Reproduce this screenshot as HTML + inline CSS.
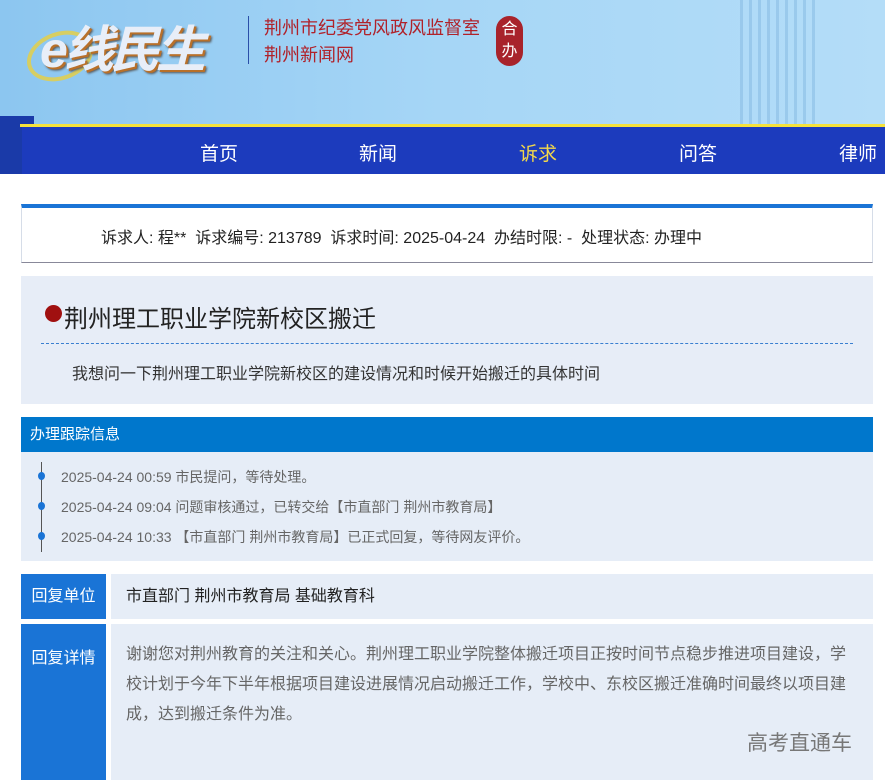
<!DOCTYPE html>
<html><head><meta charset="utf-8"><style>
body{margin:0;width:885px;height:780px;overflow:hidden;background:#fff;font-family:"Liberation Sans","Noto Sans CJK SC",sans-serif;position:relative}
.a{position:absolute}
</style></head><body>
<div class="a" style="left:0;top:0;width:885px;height:126px;background:linear-gradient(90deg,#8cc6f0,#a6d6f6 50%,#b4ddf8)"></div>
<div class="a" style="left:26px;top:32px;width:60px;height:40px;border-radius:50%;border:4px solid #e8d040;transform:rotate(-20deg);opacity:.8"></div>
<div class="a" style="left:40px;top:10px;font-size:50px;font-weight:bold;font-style:italic;color:#e8eef8;text-shadow:2px 2px 0 #b8702a,3px 3px 2px #555;letter-spacing:-4px">e线民生</div>
<div class="a" style="left:248px;top:16px;width:1px;height:48px;background:#2a4fa8"></div>
<div class="a" style="left:264px;top:15px;font-size:18px;color:#b0222a;line-height:27px">荆州市纪委党风政风监督室<br>荆州新闻网</div>
<div class="a" style="left:496px;top:16px;width:27px;height:50px;border-radius:14px;background:#a8232b;color:#fff;font-size:16px;text-align:center;line-height:22px;padding-top:3px;box-sizing:border-box">合<br>办</div>
<div class="a" style="left:740px;top:0;width:80px;height:124px;opacity:.35;background:repeating-linear-gradient(90deg,#6fa8d8 0 3px,transparent 3px 9px)"></div>
<div class="a" style="left:0;top:116px;width:34px;height:58px;background:#1a3aa8"></div>
<div class="a" style="left:20px;top:124px;width:865px;height:3px;background:#f5e23c"></div>
<div class="a" style="left:22px;top:127px;width:863px;height:47px;background:#1c3bbd;color:#fff;font-size:19px">
<span class="a" style="left:178px;top:12px">首页</span><span class="a" style="left:337px;top:12px">新闻</span><span class="a" style="left:497px;top:12px;color:#f3d84a">诉求</span><span class="a" style="left:657px;top:12px">问答</span><span class="a" style="left:817px;top:12px">律师</span></div>
<div class="a" style="left:21px;top:204px;width:852px;height:59px;border:1px solid #d6dde8;border-top:4px solid #1a74d6;border-bottom:1px solid #889;box-sizing:border-box;background:#fff;font-size:16px;color:#222;padding:16px 0 0 79px;white-space:nowrap">诉求人: 程**&nbsp; 诉求编号: 213789&nbsp; 诉求时间: 2025-04-24&nbsp; 办结时限: -&nbsp; 处理状态: 办理中</div>
<div class="a" style="left:21px;top:276px;width:852px;height:128px;background:#e7edf7"></div>
<div class="a" style="left:45px;top:305px;width:17px;height:17px;border-radius:50%;background:#a01010"></div>
<div class="a" style="left:64px;top:299px;font-size:24px;color:#222">荆州理工职业学院新校区搬迁</div>
<div class="a" style="left:41px;top:343px;width:812px;border-top:1px dashed #3a7fd0"></div>
<div class="a" style="left:72px;top:360px;font-size:16px;color:#333">我想问一下荆州理工职业学院新校区的建设情况和时候开始搬迁的具体时间</div>
<div class="a" style="left:21px;top:417px;width:852px;height:35px;background:#0077cc;color:#fff;font-size:15px;line-height:36px;padding-left:9px;box-sizing:border-box">办理跟踪信息</div>
<div class="a" style="left:21px;top:452px;width:852px;height:109px;background:#e6edf7;font-size:14px;color:#666">
<div class="a" style="left:20px;top:10px;width:1px;height:90px;background:#555"></div>
<div class="a" style="left:17px;top:20px;width:7px;height:8px;border-radius:50%;background:#1a74d6"></div>
<div class="a" style="left:17px;top:50px;width:7px;height:8px;border-radius:50%;background:#1a74d6"></div>
<div class="a" style="left:17px;top:80px;width:7px;height:8px;border-radius:50%;background:#1a74d6"></div>
<div class="a" style="left:40px;top:15px">2025-04-24 00:59 市民提问，等待处理。</div>
<div class="a" style="left:40px;top:45px">2025-04-24 09:04 问题审核通过，已转交给【市直部门 荆州市教育局】</div>
<div class="a" style="left:40px;top:75px">2025-04-24 10:33 【市直部门 荆州市教育局】已正式回复，等待网友评价。</div>
</div>
<div class="a" style="left:21px;top:574px;width:85px;height:45px;background:#1a74d6;color:#fff;font-size:16px;line-height:46px;text-align:center">回复单位</div>
<div class="a" style="left:111px;top:574px;width:762px;height:45px;background:#e6edf7;font-size:16px;color:#222;line-height:46px;padding-left:15px;box-sizing:border-box">市直部门 荆州市教育局 基础教育科</div>
<div class="a" style="left:21px;top:624px;width:85px;height:156px;background:#1a74d6;color:#fff;font-size:16px;text-align:center;padding-top:20px;box-sizing:border-box">回复详情</div>
<div class="a" style="left:111px;top:624px;width:762px;height:156px;background:#e6edf7;font-size:16px;color:#666;line-height:30px;padding:16px 20px 0 15px;box-sizing:border-box">谢谢您对荆州教育的关注和关心。荆州理工职业学院整体搬迁项目正按时间节点稳步推进项目建设，学校计划于今年下半年根据项目建设进展情况启动搬迁工作，学校中、东校区搬迁准确时间最终以项目建成，达到搬迁条件为准。</div>
<div class="a" style="left:747px;top:727px;font-size:21px;color:#777">高考直通车</div>
</body></html>
